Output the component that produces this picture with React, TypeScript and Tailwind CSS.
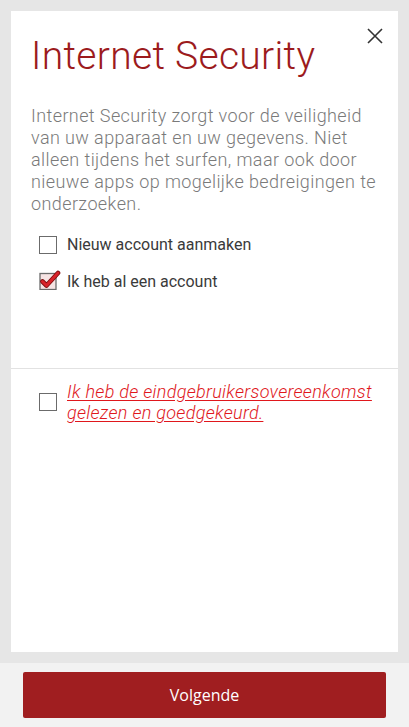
import React from "react";

const roboto = { fontFamily: "Roboto, 'Noto Sans', sans-serif" };

const Box: React.FC<{ checked?: boolean }> = ({ checked }) =>
  checked ? (
    <svg width="22" height="20" viewBox="0 0 22 20" className="shrink-0 -mt-[3px]">
      <rect x="1" y="3.5" width="16" height="16" fill="#f6e4e4" stroke="#6b6b6b" strokeWidth="1.3" />
      <path
        d="M3.5 11.5 L7.5 15.5 L19 3"
        fill="none"
        stroke="#7a0d0d"
        strokeWidth="4.6"
        strokeLinecap="round"
        strokeLinejoin="round"
      />
      <path
        d="M3.5 11.5 L7.5 15.5 L19 3"
        fill="none"
        stroke="#d8232a"
        strokeWidth="3"
        strokeLinecap="round"
        strokeLinejoin="round"
      />
    </svg>
  ) : (
    <span className="block w-[18px] h-[18px] shrink-0 border-[1.5px] border-[#6b6b6b] bg-white" />
  );

export default function App() {
  return (
    <div className="w-[409px] h-[727px] flex flex-col bg-[#e6e6e6]" style={roboto}>
      {/* Card area */}
      <div className="flex-1 px-[11px] pt-[11px] pb-[11px]">
        <div className="relative h-full bg-white">
          <button className="absolute right-[14px] top-[16px] text-[#333]" aria-label="close">
            <svg width="18" height="18" viewBox="0 0 18 18">
              <path d="M2 2 L16 16 M16 2 L2 16" stroke="#333" strokeWidth="1.6" />
            </svg>
          </button>

          <div className="pl-[20px] pr-[8px] pt-[22px]">
            <h1 className="text-[39px] leading-[46px] font-light text-[#9c1b1d] tracking-[0.3px]">
              Internet Security
            </h1>

            <p className="mt-[26px] text-[18px] leading-[22px] font-light text-[#7a7a7a] tracking-[0.4px] whitespace-nowrap">
              Internet Security zorgt voor de veiligheid
              <br />
              van uw apparaat en uw gegevens. Niet
              <br />
              alleen tijdens het surfen, maar ook door
              <br />
              nieuwe apps op mogelijke bedreigingen te
              <br />
              onderzoeken.
            </p>

            <div className="mt-[20px] pl-[8px] flex flex-col gap-[18px]">
              <label className="flex items-center gap-[10px]">
                <Box />
                <span className="text-[16px] leading-[19px] text-[#3a3a3a]">
                  Nieuw account aanmaken
                </span>
              </label>
              <label className="flex items-center gap-[6px]">
                <Box checked />
                <span className="text-[16px] leading-[19px] text-[#3a3a3a]">
                  Ik heb al een account
                </span>
              </label>
            </div>
          </div>

          <div className="mt-[77px] border-t border-[#e2e2e2]" />

          <div className="pl-[28px] pr-[8px] pt-[12px] flex items-center gap-[10px]">
            <Box />
            <a className="text-[18px] leading-[21px] font-light italic text-[#e0171c] underline underline-offset-2 tracking-[0.3px] whitespace-nowrap">
              Ik heb de eindgebruikersovereenkomst
              <br />
              gelezen en goedgekeurd.
            </a>
          </div>
        </div>
      </div>

      {/* Bottom bar */}
      <div className="h-[64px] bg-[#f2f2f2] px-[23px] pt-[9px]">
        <button
          className="w-full h-[46px] rounded-[2px] bg-[#a01e20] text-white text-[16px]"
          style={{ fontFamily: "'Open Sans', sans-serif" }}
        >
          Volgende
        </button>
      </div>
    </div>
  );
}
